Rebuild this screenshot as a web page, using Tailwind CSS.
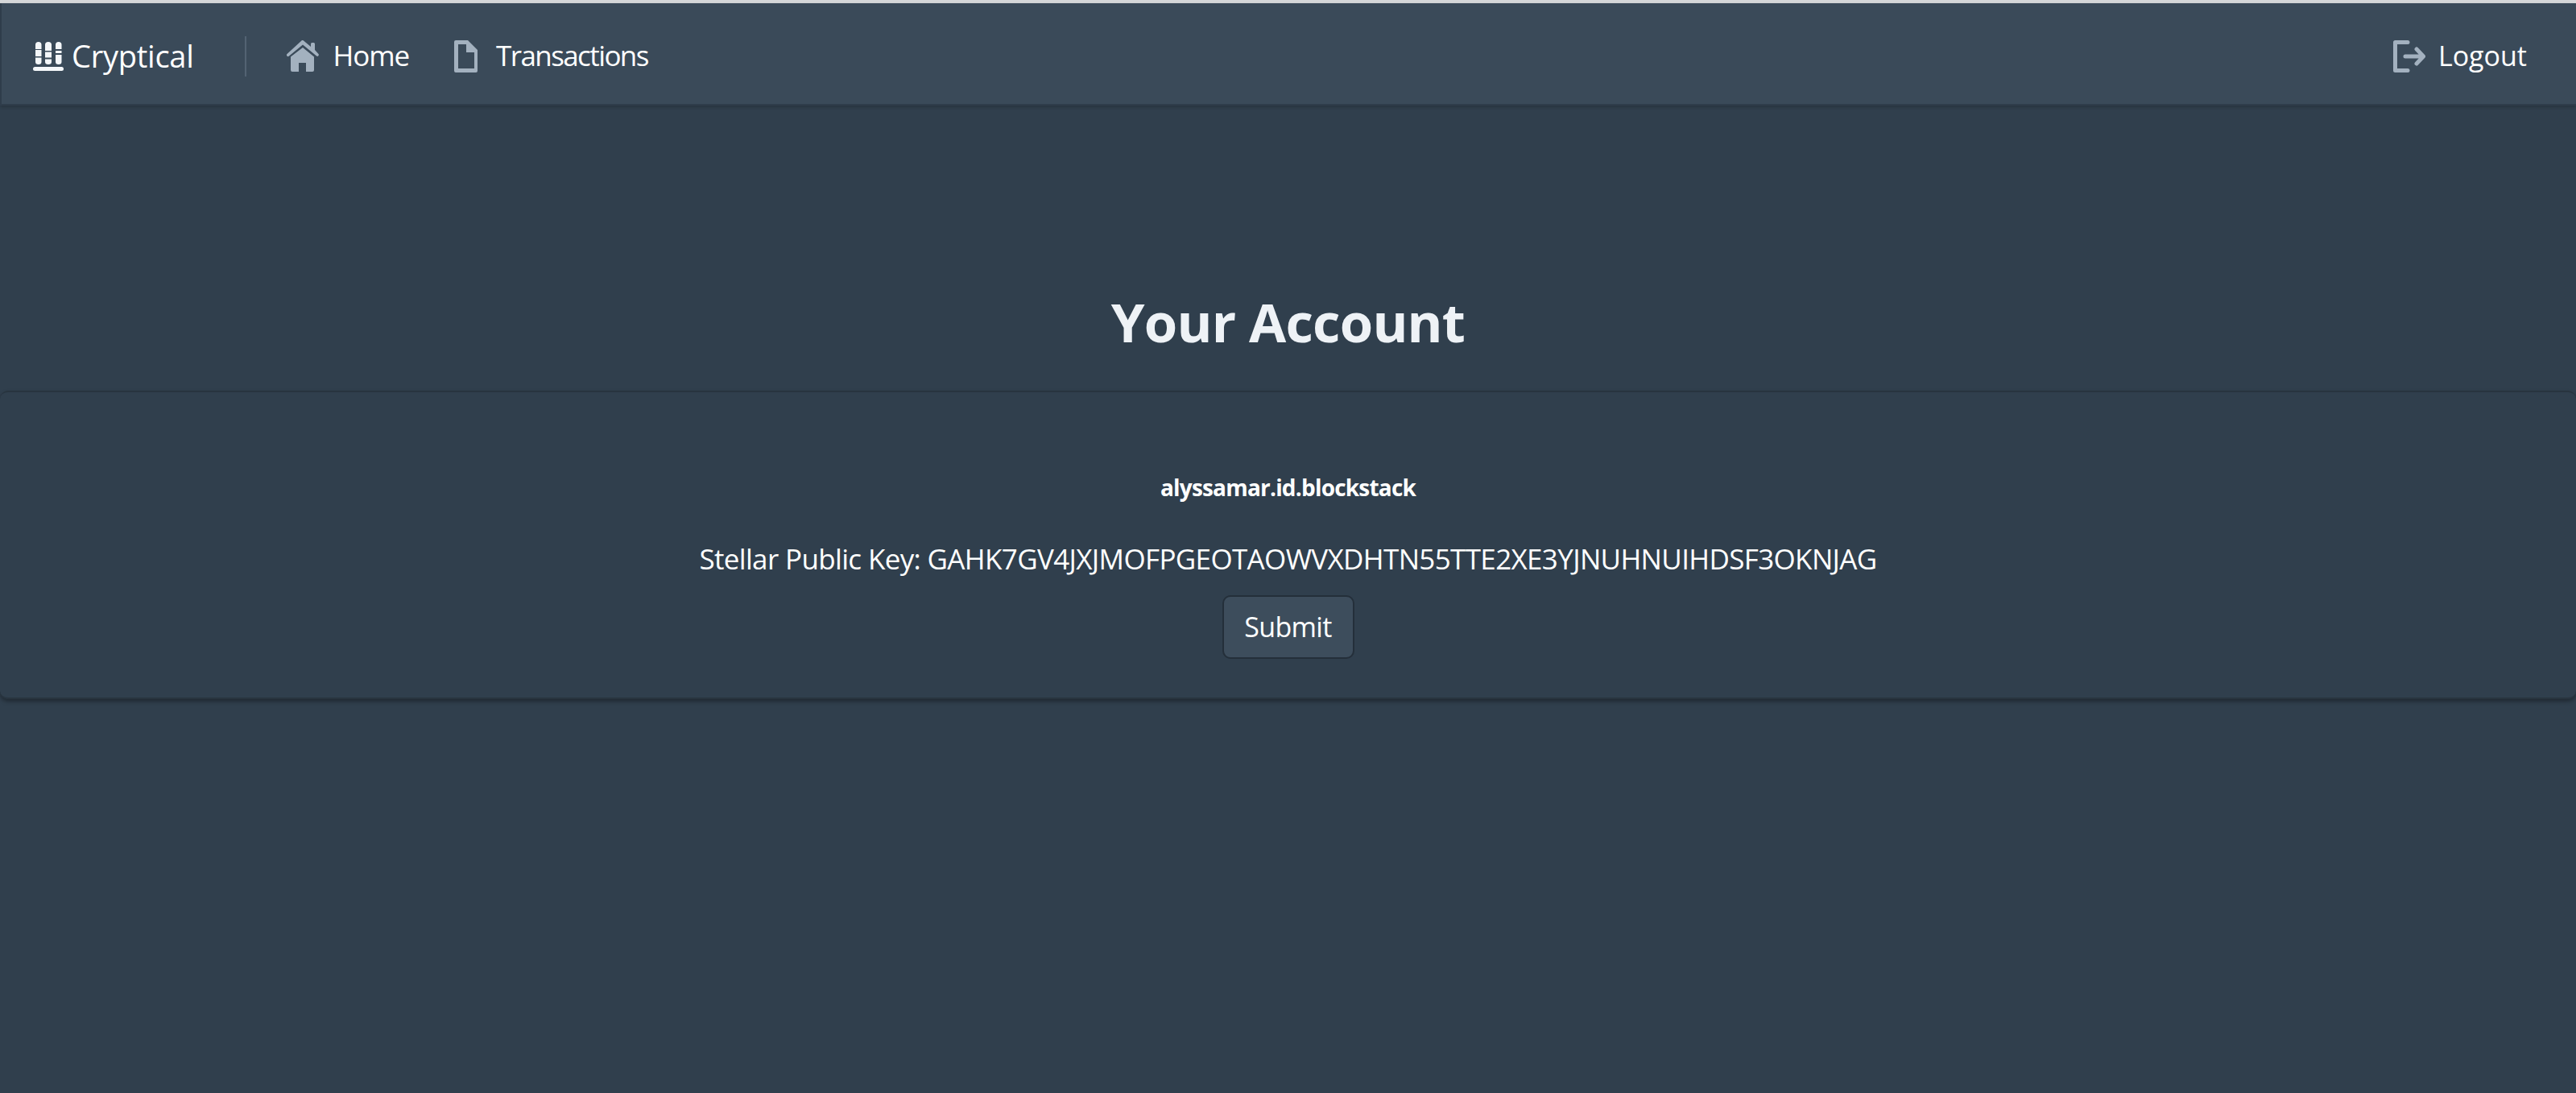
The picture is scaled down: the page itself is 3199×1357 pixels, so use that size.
<!doctype html>
<html>
<head>
  <meta charset="UTF-8">
  <meta name="viewport" content="width=device-width, initial-scale=1.0">
  <script src="https://cdn.jsdelivr.net/npm/@tailwindcss/browser@4"></script>
  <title>Cryptical</title>
</head>
<body class="h-screen overflow-hidden bg-[#303f4d] font-['Open_Sans',sans-serif] text-white">
  <div class="h-1 bg-[#d5d7d9]"></div>
  <!-- navbar -->
  <nav class="flex h-[127px] items-center justify-between border-l-2 border-b-2 border-[#2f3d4b] bg-[#3a4a59] pt-[6px] pl-[39px] pr-[61px] shadow-[0_2px_4px_rgba(0,0,0,0.2)]">
    <div class="flex items-center">
      <a class="flex items-center gap-[10px] text-[38px] tracking-[-0.25px]">
        <svg class="h-[36px] w-[38px]" viewBox="0 0 38 36" fill="#f4f7fa">
          <path d="M3 3.500a3.750 3.500 0 0 1 7.500 0V9H3zM3 10h7.500v8H3zM3 19.500h7.500V25a3.750 3 0 0 1-7.500 0z"/>
          <path d="M15 3.500a4 3.500 0 0 1 8 0V11h-8zM15 12.500h8v7h-8zM15 21.500h8V25a4 3 0 0 1-8 0z"/>
          <path d="M28 3.500a3.750 3.500 0 0 1 7.500 0V9H28zM28 11h7.500v3H28zM28 16h7.500v9a3.750 3 0 0 1-7.500 0z"/>
          <rect x="0" y="31" width="38" height="5" rx="2.500"/>
        </svg>
        Cryptical
      </a>
      <div class="ml-[63px] h-[50px] w-0.5 bg-[#536373]"></div>
      <a class="ml-[50px] flex items-center gap-[18px] text-[35px] tracking-[-1.1px]">
        <svg class="h-[40px] w-[40px]" viewBox="0 0 40 40" fill="#a3b1bf">
          <path d="M19 0a2 2 0 0 1 2 .6L30 8V4.500a1.500 1.500 0 0 1 1.500-1.500h2A1.500 1.500 0 0 1 35 4.500V12l4.500 5a1.800 1.800 0 0 1-2.400 2.600L20 5.500 3 19.600A1.800 1.800 0 0 1 .5 17z"/>
          <path d="M20 9 34 20.500V37a2 2 0 0 1-2 2H24V28H15v11H7a2 2 0 0 1-2-2V20.500z"/>
        </svg>
        Home
      </a>
      <a class="ml-[56px] flex items-center gap-[23px] text-[35px] tracking-[-1.6px]">
        <svg class="h-[40px] w-[29px]" viewBox="0 0 29 40" fill="#a3b1bf" fill-rule="evenodd">
          <path d="M2 0H17L29 12V38a2 2 0 0 1-2 2H2a2 2 0 0 1-2-2V2a2 2 0 0 1 2-2zM5 5V35H25V15H15V5z"/>
        </svg>
        Transactions
      </a>
    </div>
    <a class="flex items-center gap-4 text-[34px] tracking-[0px]">
      <svg class="h-[40px] w-[40px]" viewBox="0 0 40 40" fill="none" stroke="#a3b1bf" stroke-width="5" stroke-linecap="round" stroke-linejoin="round">
        <path d="M18 2.500H2.500v35H18"/>
        <path d="M15 20H37M29 11l8.500 9-8.500 9"/>
      </svg>
      Logout
    </a>
  </nav>

  <main>
    <h1 class="pt-[238px] text-center text-[67px] leading-[60px] font-bold text-[#eef2f6] tracking-[-0.8px]">Your Account</h1>
    <!-- account card -->
    <section class="mt-[56px] flex h-[383px] flex-col items-center rounded-[10px] border-t-2 border-b-2 border-[#28343f] pt-[100px] shadow-[0_3px_5px_rgba(0,0,0,0.35)]">
      <p class="text-[28px] leading-[36px] font-bold tracking-[-0.8px]">alyssamar.id.blockstack</p>
      <p class="mt-[48px] text-[35px] leading-[46px] tracking-[-0.65px]">Stellar Public Key: GAHK7GV4JXJMOFPGEOTAOWVXDHTN55TTE2XE3YJNUHNUIHDSF3OKNJAG</p>
      <button class="mt-[22px] h-[79px] w-[164px] rounded-[10px] border-2 border-[#242f3a] bg-[#3d4d5c] text-[34px] tracking-[-0.7px]">Submit</button>
    </section>
  </main>
</body>
</html>
